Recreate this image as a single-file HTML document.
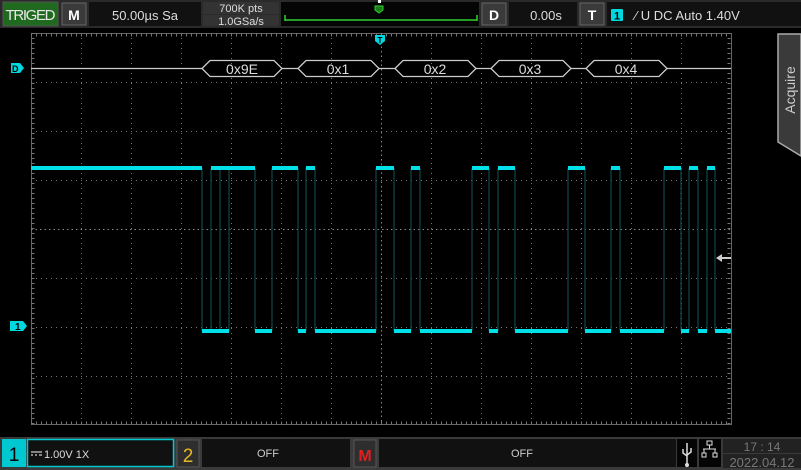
<!DOCTYPE html>
<html><head><meta charset="utf-8"><style>
html,body{margin:0;padding:0;background:#000;width:801px;height:470px;overflow:hidden}
svg{display:block}
text{font-family:"Liberation Sans",sans-serif}
</style></head><body>
<svg width="801" height="470" viewBox="0 0 801 470" xmlns="http://www.w3.org/2000/svg">
<!-- top bar -->
<rect x="0" y="0" width="801" height="28" fill="#2a2a2a"/>
<rect x="3" y="2" width="55" height="24" fill="#1f6a1f" stroke="#555" />
<text x="30.5" y="20" fill="#e8e8e8" font-size="15" text-anchor="middle" textLength="50">TRIGED</text>
<rect x="62" y="3" width="24" height="22" fill="#3a3a3a" stroke="#666"/>
<text x="74" y="20" fill="#fff" font-size="14" font-weight="bold" text-anchor="middle">M</text>
<rect x="89" y="2" width="112" height="24" fill="#111"/>
<text x="145" y="20" fill="#ddd" font-size="13" text-anchor="middle">50.00µs  Sa</text>
<rect x="203" y="2" width="76" height="12" fill="#333"/>
<rect x="203" y="15" width="76" height="11" fill="#333"/>
<text x="241" y="12" fill="#ddd" font-size="11" text-anchor="middle">700K pts</text>
<text x="241" y="25" fill="#ddd" font-size="11" text-anchor="middle">1.0GSa/s</text>
<rect x="281" y="2" width="198" height="24" fill="#050505"/>
<path d="M285 15 V21 M285 20 H477 M477 15 V21" stroke="#2ed02e" stroke-width="1.5" fill="none"/>
<path d="M375 6 h8 v4 l-4 3 l-4 -3z" fill="#1c7a1c" stroke="#2ed02e"/>
<rect x="378" y="0" width="3" height="3" fill="#fff"/>
<rect x="482" y="3" width="24" height="22" fill="#3a3a3a" stroke="#666"/>
<text x="494" y="20" fill="#fff" font-size="14" font-weight="bold" text-anchor="middle">D</text>
<rect x="509" y="2" width="68" height="24" fill="#111"/>
<text x="546" y="20" fill="#ddd" font-size="13" text-anchor="middle">0.00s</text>
<rect x="580" y="3" width="24" height="22" fill="#3a3a3a" stroke="#666"/>
<text x="592" y="20" fill="#fff" font-size="14" font-weight="bold" text-anchor="middle">T</text>
<rect x="607" y="2" width="194" height="24" fill="#111"/>
<rect x="611" y="9" width="12" height="12" fill="#00d8e0" rx="1"/>
<text x="617" y="19.5" fill="#000" font-size="11" font-weight="bold" text-anchor="middle">1</text>
<text x="635" y="20" fill="#ddd" font-size="13">⁄ U DC Auto 1.40V</text>
<!-- plot frame -->
<rect x="31.5" y="33.5" width="700" height="391" fill="none" stroke="#666"/>
<g stroke="#777" stroke-width="1" stroke-dasharray="1 4">
<path d="M31 82.5H731M31 131.5H731M31 180.5H731M31 278.5H731M31 327.5H731M31 376.5H731"/>
<path d="M81.5 33V425M131.5 33V425M181.5 33V425M231.5 33V425M281.5 33V425M331.5 33V425M431.5 33V425M481.5 33V425M531.5 33V425M581.5 33V425M631.5 33V425M681.5 33V425"/>
</g>
<g stroke="#888" stroke-width="1" stroke-dasharray="1.5 3">
<path d="M31 229.5H731M381.5 33V425"/>
</g>
<g stroke="#777" stroke-dasharray="1 4" stroke-width="3">
<path d="M31 35H731M31 423H731M33 33V425M729 33V425"/>
</g>
<!-- decode bus -->
<g stroke="#ccc" stroke-width="1.3" fill="none">
<path d="M31 68.5H202M282 68.5H298M379 68.5H395M476 68.5H491M571 68.5H586M667 68.5H731"/>
<path d="M202 68.5l8 -8h64l8 8l-8 8h-64z"/>
<path d="M298 68.5l8 -8h65l8 8l-8 8h-65z"/>
<path d="M395 68.5l8 -8h65l8 8l-8 8h-65z"/>
<path d="M491 68.5l8 -8h64l8 8l-8 8h-64z"/>
<path d="M586 68.5l8 -8h65l8 8l-8 8h-65z"/>
</g>
<g fill="#ddd" font-size="14" text-anchor="middle">
<text x="242" y="74">0x9E</text><text x="338" y="74">0x1</text><text x="435" y="74">0x2</text><text x="530" y="74">0x3</text><text x="626" y="74">0x4</text>
</g>
<path d="M11 63h9l4 5l-4 5h-9z" fill="#00d8e0"/>
<text x="12" y="72" font-size="9" fill="#000" font-weight="bold">D</text>
<path d="M375 35h10v6l-5 4l-5-4z" fill="#00d8e0"/>
<text x="380" y="43" font-size="8" fill="#000" font-weight="bold" text-anchor="middle">T</text>
<!-- waveform edges (faint) -->
<path d="M202 168V331M211 168V331M220 168V331M229 168V331M255 168V331M272 168V331M298 168V331M306 168V331M315 168V331M376 168V331M394 168V331M411 168V331M420 168V331M472 168V331M489 168V331M498 168V331M515 168V331M568 168V331M585 168V331M611 168V331M620 168V331M664 168V331M681 168V331M689 168V331M698 168V331M707 168V331M715 168V331" stroke="#0f4848" stroke-width="1.2"/>
<!-- waveform levels -->
<g fill="#00e0e8">
<rect x="31" y="166" width="171" height="4"/>
<rect x="211" y="166" width="44" height="4"/>
<rect x="272" y="166" width="26" height="4"/>
<rect x="306" y="166" width="9" height="4"/>
<rect x="376" y="166" width="18" height="4"/>
<rect x="411" y="166" width="9" height="4"/>
<rect x="472" y="166" width="17" height="4"/>
<rect x="498" y="166" width="17" height="4"/>
<rect x="568" y="166" width="17" height="4"/>
<rect x="611" y="166" width="9" height="4"/>
<rect x="664" y="166" width="17" height="4"/>
<rect x="689" y="166" width="9" height="4"/>
<rect x="707" y="166" width="8" height="4"/>
<rect x="202" y="329" width="27" height="4"/>
<rect x="255" y="329" width="17" height="4"/>
<rect x="298" y="329" width="8" height="4"/>
<rect x="315" y="329" width="61" height="4"/>
<rect x="394" y="329" width="17" height="4"/>
<rect x="420" y="329" width="52" height="4"/>
<rect x="489" y="329" width="9" height="4"/>
<rect x="515" y="329" width="53" height="4"/>
<rect x="585" y="329" width="26" height="4"/>
<rect x="620" y="329" width="44" height="4"/>
<rect x="681" y="329" width="8" height="4"/>
<rect x="698" y="329" width="9" height="4"/>
<rect x="715" y="329" width="16" height="4"/>
</g>
<path d="M10 321h13l4 5l-4 5h-13z" fill="#00d8e0"/>
<text x="15" y="330" font-size="10" fill="#000" font-weight="bold">1</text>
<path d="M716 258l6-4v3h9v2h-9v3z" fill="#ccc"/>
<!-- Acquire tab -->
<path d="M778 34H801V156L778 142Z" fill="#3a3a3a" stroke="#aaa" stroke-width="1.5"/>
<text transform="translate(795 90) rotate(-90)" fill="#ccc" font-size="14" text-anchor="middle" font-family="Liberation Mono">Acquire</text>
<!-- bottom bar -->
<rect x="0" y="437" width="801" height="33" fill="#3a3a3a"/>
<rect x="2" y="439" width="24" height="28" fill="#00c8d0"/>
<text x="14" y="461" fill="#000" font-size="19" text-anchor="middle">1</text>
<rect x="27.5" y="439.5" width="146" height="27" fill="#111" stroke="#00c8d0" stroke-width="1.5"/>
<path d="M31 452h11M31 455h2M35 455h2M39 455h3" stroke="#ccc" stroke-width="1.2"/>
<text x="44" y="458" fill="#ddd" font-size="11">1.00V 1X</text>
<rect x="177" y="440" width="22" height="27" fill="#2e2e2e" stroke="#555"/>
<text x="188" y="462" fill="#e8b820" font-size="19" text-anchor="middle">2</text>
<rect x="202" y="439" width="148" height="28" fill="#111"/>
<text x="268" y="457" fill="#ccc" font-size="11" text-anchor="middle">OFF</text>
<rect x="354" y="440" width="22" height="27" fill="#2e2e2e" stroke="#555"/>
<text x="365" y="461" fill="#e02020" font-size="16" font-weight="bold" text-anchor="middle">M</text>
<rect x="379" y="439" width="297" height="28" fill="#111"/>
<text x="522" y="457" fill="#ccc" font-size="11" text-anchor="middle">OFF</text>
<rect x="677" y="439" width="20" height="28" fill="#050505"/>
<path d="M687 443v22M683 449v4l4 3M691 448v4l-4 3" stroke="#ddd" stroke-width="1.5" fill="none"/>
<circle cx="687" cy="465" r="2" fill="#ddd"/>
<rect x="699" y="439" width="22" height="28" fill="#050505"/>
<path d="M707 441h5v4h-5zM709.5 445v4M703 449h13M704 449v4M715 449v4M702 453h4v4h-4zM713 453h4v4h-4z" stroke="#ddd" fill="none"/>
<rect x="723" y="439" width="78" height="14" fill="#222"/>
<rect x="723" y="454" width="78" height="14" fill="#222"/>
<text x="762" y="451" fill="#777" font-size="12" text-anchor="middle">17 : 14</text>
<text x="762" y="467" fill="#777" font-size="13" text-anchor="middle">2022.04.12</text>
</svg>
</body></html>
